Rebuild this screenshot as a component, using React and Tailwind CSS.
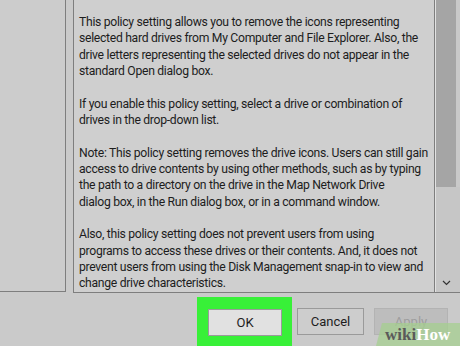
import React from "react";

const paras = [
  [
    "This policy setting allows you to remove the icons representing",
    "selected hard drives from My Computer and File Explorer. Also, the",
    "drive letters representing the selected drives do not appear in the",
    "standard Open dialog box.",
  ],
  [
    "If you enable this policy setting, select a drive or combination of",
    "drives in the drop-down list.",
  ],
  [
    "Note: This policy setting removes the drive icons. Users can still gain",
    "access to drive contents by using other methods, such as by typing",
    "the path to a directory on the drive in the Map Network Drive",
    "dialog box, in the Run dialog box, or in a command window.",
  ],
  [
    "Also, this policy setting does not prevent users from using",
    "programs to access these drives or their contents. And, it does not",
    "prevent users from using the Disk Management snap-in to view and",
    "change drive characteristics.",
  ],
];

export default function App() {
  return (
    <div
      className="relative w-[460px] h-[346px] overflow-hidden bg-[#cacaca] flex flex-col"
      style={{ fontFamily: 'Roboto, "Open Sans", sans-serif' }}
    >
      <div className="flex items-start h-[293px]">
        <div className="w-[66px] h-[292px] bg-[#cccccc] border-r border-b border-[#7e7e7e]" />
        <div className="ml-[7px] flex-1 h-[293px] flex bg-[#cfcfcf] border-l border-b border-[#7e7e7e]">
          <div className="w-[361px] h-full border-r border-[#7e7e7e] pl-[5px] pt-[14px] text-[12.2px] leading-[16.33px] tracking-[-0.3px] text-[#1d1d1d]">
            {paras.map((p, i) => (
              <div key={i} className={i > 0 ? "mt-[16.33px]" : ""}>
                {p.map((l, j) => (
                  <div key={j} className="whitespace-nowrap">
                    {l}
                  </div>
                ))}
              </div>
            ))}
          </div>
          <div className="flex-1 h-full flex flex-col bg-[#c6c6c6] border-l border-[#e2e2e2]">
            <div className="flex h-[187px]">
              <div className="w-[20px] h-full bg-[#a5a5a5]" />
              <div className="flex-1 h-full bg-[#c9c9c9]" />
            </div>
            <div className="flex-1 flex items-end justify-start pl-[6px] pb-[6px]">
              <svg width="9" height="6" viewBox="0 0 9 6">
                <polyline points="1,1 4.5,4.5 8,1" fill="none" stroke="#333" strokeWidth="1.2" />
              </svg>
            </div>
          </div>
        </div>
      </div>
      <div className="flex-1 flex items-start pl-[197px] pt-[4px] text-[13px] text-[#1d1d1d]">
        <div className="w-[95px] h-[60px] bg-[#38f038] pt-[12px] pl-[11px]">
          <div className="w-[74px] h-[27px] bg-[#e1e1e1] border border-[#9a9a9a] flex items-center justify-center">
            OK
          </div>
        </div>
        <div className="ml-[5px] mt-[11px] w-[67px] h-[27px] bg-[#cdcdcd] border border-[#9a9a9a] flex items-center justify-center">
          Cancel
        </div>
        <div className="ml-[10px] mt-[11px] w-[74px] h-[27px] bg-[#bdbdbd] border border-[#b3b3b3] flex items-center justify-center text-[#9d9d9d]">
          Apply
        </div>
      </div>
      <div
        className="absolute right-0 bottom-0 w-[84px] h-[23px] bg-[#a6cf90]/75 flex items-center pl-[9px] text-[17px] font-bold leading-none"
        style={{ fontFamily: '"Liberation Serif", serif', clipPath: "polygon(6px 0, 100% 0, 100% 100%, 0 100%)" }}
      >
        <span className="text-[#5a5a5a]">wiki</span>
        <span className="text-white">How</span>
      </div>
    </div>
  );
}
